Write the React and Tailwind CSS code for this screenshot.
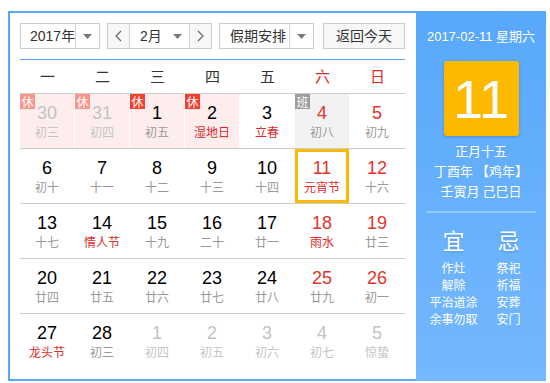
import React from 'react';

const FONT = { fontFamily: '"Liberation Sans", Arial, "Noto Sans CJK SC", sans-serif' };

const WEEK = ['一', '二', '三', '四', '五', '六', '日'];

// d: day, l: lunar, t: 'out' for other month, red: red number, lr: red lunar, badge, bg
const ROWS = [
  [
    { d: 30, l: '初三', t: 'out', badge: 'xiu-light', bg: 'pink' },
    { d: 31, l: '初四', t: 'out', badge: 'xiu-light', bg: 'pink' },
    { d: 1, l: '初五', badge: 'xiu', bg: 'pink' },
    { d: 2, l: '湿地日', lr: true, badge: 'xiu', bg: 'pink' },
    { d: 3, l: '立春', lr: true },
    { d: 4, l: '初八', red: true, badge: 'ban', bg: 'gray' },
    { d: 5, l: '初九', red: true },
  ],
  [
    { d: 6, l: '初十' },
    { d: 7, l: '十一' },
    { d: 8, l: '十二' },
    { d: 9, l: '十三' },
    { d: 10, l: '十四' },
    { d: 11, l: '元宵节', red: true, lr: true, sel: true },
    { d: 12, l: '十六', red: true },
  ],
  [
    { d: 13, l: '十七' },
    { d: 14, l: '情人节', lr: true },
    { d: 15, l: '十九' },
    { d: 16, l: '二十' },
    { d: 17, l: '廿一' },
    { d: 18, l: '雨水', red: true, lr: true },
    { d: 19, l: '廿三', red: true },
  ],
  [
    { d: 20, l: '廿四' },
    { d: 21, l: '廿五' },
    { d: 22, l: '廿六' },
    { d: 23, l: '廿七' },
    { d: 24, l: '廿八' },
    { d: 25, l: '廿九', red: true },
    { d: 26, l: '初一', red: true },
  ],
  [
    { d: 27, l: '龙头节', lr: true },
    { d: 28, l: '初三' },
    { d: 1, l: '初四', t: 'out' },
    { d: 2, l: '初五', t: 'out' },
    { d: 3, l: '初六', t: 'out' },
    { d: 4, l: '初七', t: 'out' },
    { d: 5, l: '惊蛰', t: 'out' },
  ],
];

const YI = ['作灶', '解除', '平治道涂', '余事勿取'];
const JI = ['祭祀', '祈福', '安葬', '安门'];

function Caret() {
  return (
    <svg width="9" height="5" viewBox="0 0 9 5">
      <path d="M0 0 L9 0 L4.5 5 Z" fill="#7a7a7a" />
    </svg>
  );
}

function Chevron({ dir }) {
  return (
    <svg width="7" height="12" viewBox="0 0 7 12">
      <path
        d={dir === 'left' ? 'M6 1 L1 6 L6 11' : 'M1 1 L6 6 L1 11'}
        fill="none"
        stroke="#666"
        strokeWidth="1.2"
      />
    </svg>
  );
}

function Select({ label, width, pad }) {
  return (
    <div className={`flex h-[26px] border border-[#cccccc] bg-white ${width}`}>
      <div className={`flex flex-1 items-center whitespace-nowrap ${pad} text-[14px] text-[#333]`}>{label}</div>
      <div className="flex w-[24px] shrink-0 items-center justify-center border-l border-[#d4d4d4]">
        <Caret />
      </div>
    </div>
  );
}

function Badge({ kind }) {
  const cls =
    kind === 'xiu'
      ? 'bg-[#f3402f]'
      : kind === 'xiu-light'
      ? 'bg-[#f8968c]'
      : 'bg-[#9c9c9c]';
  return (
    <div
      className={`absolute left-0 top-0 flex h-[15px] w-[15px] items-center justify-center text-[12px] leading-[15px] text-white ${cls}`}
      style={{ fontFamily: '"Noto Sans CJK SC", sans-serif' }}
    >
      {kind === 'ban' ? '班' : '休'}
    </div>
  );
}

function Cell({ c }) {
  const bg = c.bg === 'pink' ? 'bg-[#fdeeed]' : c.bg === 'gray' ? 'bg-[#f2f2f2]' : '';
  const numColor = c.t === 'out' ? 'text-[#c3c3c3]' : c.red ? 'text-[#e6332a]' : 'text-black';
  const lunarColor = c.t === 'out' ? 'text-[#c3c3c3]' : c.lr ? 'text-[#e02a2a]' : 'text-[#999]';
  return (
    <div className="relative h-[54px] pr-px">
      <div className={`relative flex h-full flex-col items-center pt-[8px] ${bg}`}>
        {c.badge && <Badge kind={c.badge} />}
        <div className={`text-[18px] leading-[22px] ${numColor}`}>{c.d}</div>
        <div
          className={`text-[12px] leading-[16px] ${lunarColor}`}
          style={{ fontFamily: '"Noto Sans CJK SC", sans-serif' }}
        >
          {c.l}
        </div>
      </div>
      {c.sel && (
        <div className="absolute left-0 top-0 h-[54px] w-[54px] border-[3px] border-[#fbb800]" />
      )}
    </div>
  );
}

export default function App() {
  return (
    <div className="min-h-[383px] w-[550px] bg-white" style={FONT}>
      <div className="ml-[8px] flex pt-[11px]">
        {/* left calendar */}
        <div className="h-[370px] w-[408px] border-b-2 border-l-2 border-t-2 border-[#5ba8f8] pl-[10px] pt-[10px]">
          <div className="flex w-[385px] items-center">
            <Select label="2017年" width="w-[80px]" pad="pl-[9px]" />
            <div className="ml-[7px] flex h-[26px] w-[105px] border border-[#cccccc]">
              <div className="flex w-[22px] items-center justify-center border-r border-[#d4d4d4] bg-[#f7f7f7]">
                <Chevron dir="left" />
              </div>
              <div className="flex flex-1 items-center justify-between pl-[10px] pr-[7px] text-[14px] text-[#333]">
                <span>2月</span>
                <Caret />
              </div>
              <div className="flex w-[22px] items-center justify-center border-l border-[#d4d4d4] bg-[#f7f7f7]">
                <Chevron dir="right" />
              </div>
            </div>
            <div className="ml-[7px]">
              <Select label="假期安排" width="w-[95px]" pad="pl-[10px]" />
            </div>
            <div className="ml-auto flex h-[26px] w-[82px] items-center justify-center whitespace-nowrap border border-[#cccccc] bg-[#f7f7f7] text-[14px] text-[#333]">
              返回今天
            </div>
          </div>

          <div className="mt-[10px] h-px w-[385px] bg-[#5ba8f8]" />

          <div className="grid h-[33px] w-[385px] grid-cols-7 items-center text-[15px]" style={{ fontFamily: '"Noto Sans CJK SC", sans-serif' }}>
            {WEEK.map((w, i) => (
              <div key={w} className={`text-center ${i >= 5 ? 'text-[#e02a2a]' : 'text-[#333]'}`}>
                {w}
              </div>
            ))}
          </div>

          <div className="w-[385px]">
            {ROWS.map((row, ri) => (
              <div key={ri} className="grid grid-cols-7 border-t border-[#cccccc]">
                {row.map((c, ci) => (
                  <Cell key={ci} c={c} />
                ))}
              </div>
            ))}
          </div>
        </div>

        {/* right panel */}
        <div className="flex h-[370px] w-[130px] flex-col items-center bg-gradient-to-b from-[#58a8fb] to-[#74b8fd] pt-[16px] text-white">
          <div className="whitespace-nowrap text-[13px] leading-[20px]">
            2017-02-11 星期六
          </div>
          <div className="mt-[14px] flex h-[75px] w-[75px] items-center justify-center rounded-[3px] bg-[#fdb800] text-[54px] leading-none shadow-[0_1px_3px_rgba(0,0,0,0.2)]">
            11
          </div>
          <div
            className="mt-[5px] flex flex-col items-center text-[13px] leading-[20px]"
            style={{ fontFamily: '"Noto Sans CJK SC", sans-serif' }}
          >
            <div>正月十五</div>
            <div>丁酉年 【鸡年】</div>
            <div>壬寅月 己巳日</div>
          </div>
          <div className="mt-[10px] h-[2px] w-[110px] bg-[#93c8fc]" />
          <div
            className="mt-[12px] grid w-[110px] grid-cols-2 text-center"
            style={{ fontFamily: '"Noto Sans CJK SC", sans-serif' }}
          >
            <div className="text-[22px] leading-[28px] [text-shadow:0_1px_2px_rgba(0,0,0,0.15)]">宜</div>
            <div className="text-[22px] leading-[28px] [text-shadow:0_1px_2px_rgba(0,0,0,0.15)]">忌</div>
            <div className="mt-[6px] flex flex-col text-[12px] leading-[17px]">
              {YI.map((y) => (
                <div key={y}>{y}</div>
              ))}
            </div>
            <div className="mt-[6px] flex flex-col text-[12px] leading-[17px]">
              {JI.map((y) => (
                <div key={y}>{y}</div>
              ))}
            </div>
          </div>
        </div>
      </div>
    </div>
  );
}
